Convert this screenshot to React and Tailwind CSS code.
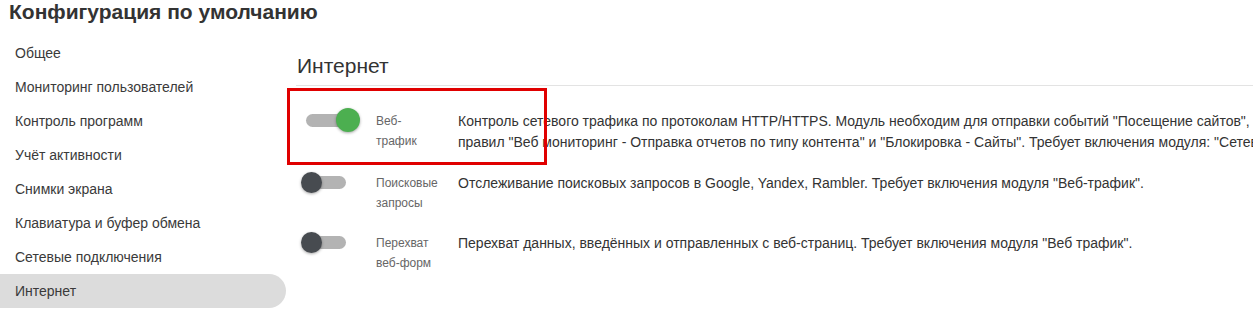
import React from "react";

const menu = [
  "Общее",
  "Мониторинг пользователей",
  "Контроль программ",
  "Учёт активности",
  "Снимки экрана",
  "Клавиатура и буфер обмена",
  "Сетевые подключения",
  "Интернет",
];

const modules = [
  {
    label: ["Веб-", "трафик"],
    on: true,
    text: [
      'Контроль сетевого трафика по протоколам HTTP/HTTPS. Модуль необходим для отправки событий "Посещение сайтов", "Поисковые запросы", а также для работы',
      'правил "Веб мониторинг - Отправка отчетов по типу контента" и "Блокировка - Сайты". Требует включения модуля: "Сетевые подключения".',
    ],
    marked: true,
  },
  {
    label: ["Поисковые", "запросы"],
    on: false,
    text: ['Отслеживание поисковых запросов в Google, Yandex, Rambler. Требует включения модуля "Веб-трафик".'],
  },
  {
    label: ["Перехват", "веб-форм"],
    on: false,
    text: ['Перехват данных, введённых и отправленных с веб-страниц. Требует включения модуля "Веб трафик".'],
  },
];

const Toggle = ({ on }) => (
  <div className="relative w-[40px] h-[22px] shrink-0 mt-[-1px]">
    <div className="absolute left-0 top-[4px] w-[40px] h-[13px] rounded-full bg-[#b3b3b3]" />
    {on ? (
      <div className="absolute left-[30px] top-[-2px] w-[24px] h-[24px] rounded-full bg-[#4caf50] shadow-[0_1px_3px_rgba(0,0,0,0.35)]" />
    ) : (
      <div className="absolute left-[-5px] top-0 w-[21px] h-[21px] rounded-full bg-[#474b50] shadow-[0_1px_3px_rgba(0,0,0,0.35)]" />
    )}
  </div>
);

export default function App() {
  return (
    <div
      className="w-[1253px] h-[314px] overflow-hidden bg-white text-[#333]"
      style={{ fontFamily: '"Liberation Sans", Arial, sans-serif' }}
    >
      <h1 className="pl-[9px] h-[24px] leading-[24px] text-[21px] font-bold text-[#333]">
        Конфигурация по умолчанию
      </h1>
      <div className="flex mt-[12px]">
        <nav className="w-[286px] shrink-0 flex flex-col">
          {menu.map((item) => (
            <div
              key={item}
              className={
                "h-[34px] leading-[34px] pl-[15px] text-[14px] text-[#3a3a3a] rounded-r-full " +
                (item === "Интернет" ? "bg-[#dcdcdc]" : "")
              }
            >
              {item}
            </div>
          ))}
        </nav>
        <section className="flex-1 min-w-0 ml-[10px]">
          <h2 className="pt-[16px] pb-[6px] pl-[1px] h-[50px] leading-[28px] text-[21px] text-[#333] border-b border-[#e3e3e3]">
            Интернет
          </h2>
          <div className="flex flex-col pt-[15px]">
            {modules.map((m, i) => (
              <div key={i} className="relative flex items-start py-[10px] whitespace-nowrap">
                {m.marked && (
                  <div className="absolute left-[-9px] top-[-13px] w-[260px] h-[77px] border-[3px] border-[#e00000] pointer-events-none" />
                )}
                <div className="w-[80px] pl-[10px] shrink-0">
                  <Toggle on={m.on} />
                </div>
                <div className="w-[82px] shrink-0 text-[12px] leading-[20px] text-[#666]">
                  {m.label.map((l) => (
                    <div key={l}>{l}</div>
                  ))}
                </div>
                <div className="text-[14px] leading-[21px] text-[#333]">
                  {m.text.map((t) => (
                    <div key={t}>{t}</div>
                  ))}
                </div>
              </div>
            ))}
          </div>
        </section>
      </div>
    </div>
  );
}
